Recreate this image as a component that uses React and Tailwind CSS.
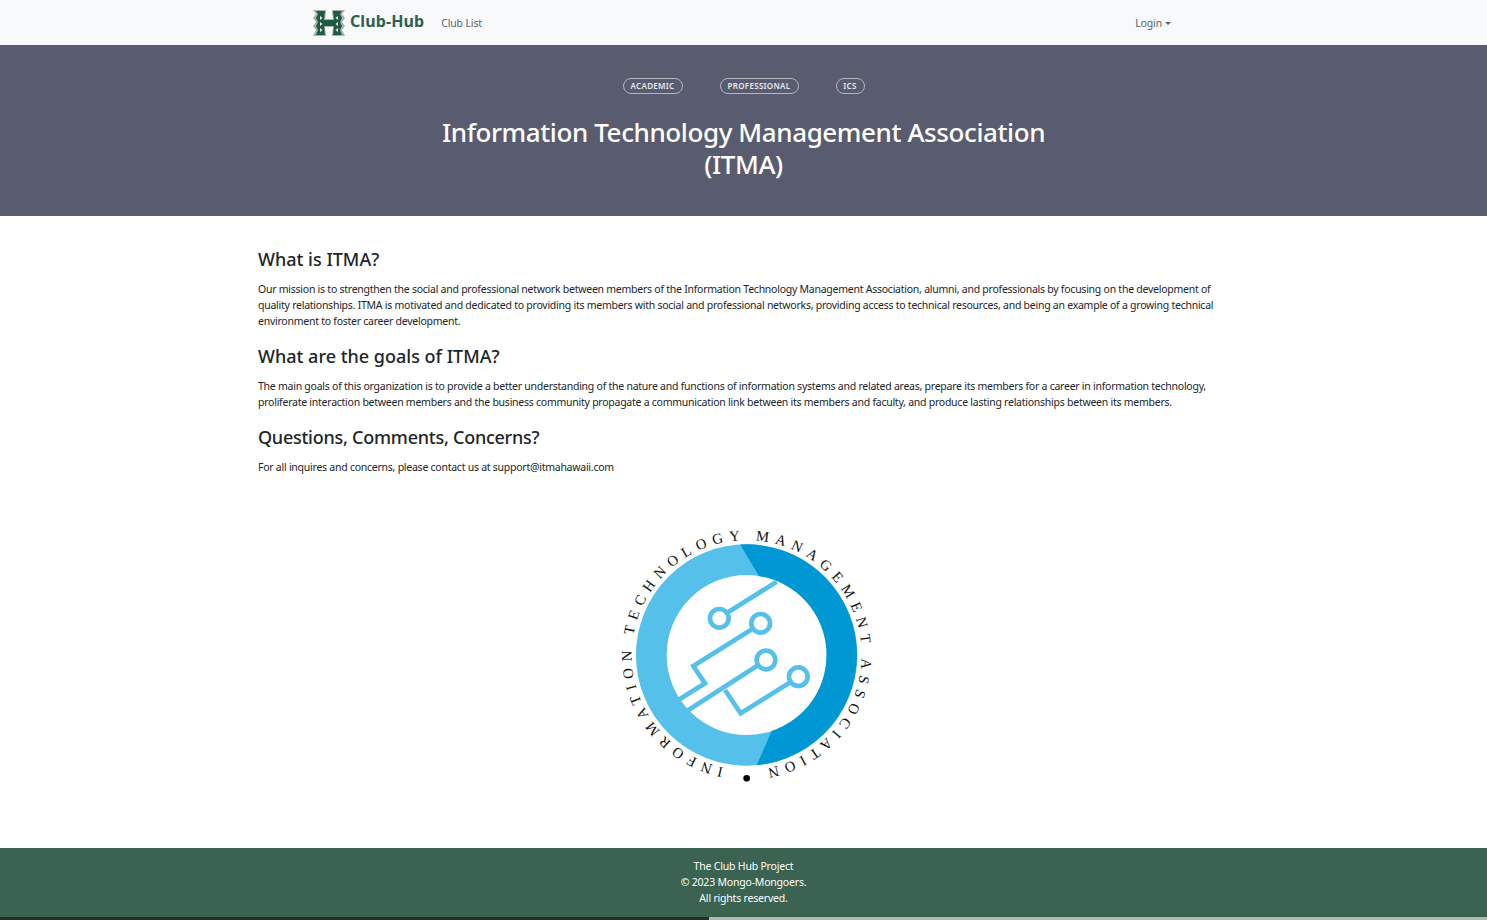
import React from "react";
import { Fragment } from "react";

const font = { fontFamily: '"Noto Sans", "Open Sans", sans-serif' };

function HLogo() {
  return (
    <svg viewBox="0 0 32 28" className="w-[32px] h-[28px] shrink-0">
      {/* grey outline with teeth */}
      <path d="M0 1 L13 1 L13 3 L12 10 L20 10 L19 3 L19 1 L32 1 L29 5 L32 9 L29 13 L32 17 L29 21 L32 27 L19 27 L20 18 L12 18 L13 27 L0 27 L3 21 L0 17 L3 13 L0 9 L3 5 Z" fill="#a9b1ad" />
      <path d="M3 2 L12 2 L11 11 L21 11 L20 2 L29 2 L27 5 L29 9 L27 13 L29 17 L27 21 L29 26 L20 26 L21 17 L11 17 L12 26 L3 26 L5 21 L3 17 L5 13 L3 9 L5 5 Z" fill="#1d5c40" />
      {/* white teeth inside the posts */}
      <g fill="#eef2f0">
        <path d="M7 7 L9.5 9 L7 11 Z" />
        <path d="M7 13 L9.5 15 L7 17 Z" />
        <path d="M7 19 L9.5 21 L7 23 Z" />
        <path d="M25 7 L22.5 9 L25 11 Z" />
        <path d="M25 13 L22.5 15 L25 17 Z" />
        <path d="M25 19 L22.5 21 L25 23 Z" />
      </g>
    </svg>
  );
}

function ItmaLogo() {
  return (
    <svg viewBox="0 0 810 810" className="w-[270px] h-[270px]">
      <defs>
        <path id="itma-arc" d="M 410 750 A 345 345 0 1 1 410.01 750" />
      </defs>
      <circle cx="410" cy="405" r="286" fill="none" stroke="#55c1ea" strokeWidth="92" />
      <path d="M 390 73.6 A 332 332 0 0 1 440 735.6 L 485 633 A 240 240 0 0 0 447 168 Z" fill="#0098d4" />
      <g fill="none" stroke="#55c1ea" strokeWidth="14">
        <path d="M 500 185 L 352 278" />
        <circle cx="328" cy="295" r="28" />
        <path d="M 428 326 L 250 438 L 285 490 L 205 540" />
        <circle cx="452" cy="310" r="28" />
        <path d="M 444 436 L 232 572" />
        <circle cx="468" cy="420" r="28" />
        <path d="M 345 510 L 392 580 L 542 486" />
        <circle cx="565" cy="470" r="28" />
      </g>
      <text fontFamily='"Liberation Serif", serif' fontSize="44" fill="#111">
        <textPath href="#itma-arc" startOffset="70" textLength="2035" lengthAdjust="spacing">
          INFORMATION TECHNOLOGY MANAGEMENT ASSOCIATION
        </textPath>
      </text>
      <circle cx="410" cy="775" r="10" fill="#000" />
    </svg>
  );
}

const tags = [
  { label: "ACADEMIC", cls: "w-[60px]" },
  { label: "PROFESSIONAL", cls: "w-[79px]" },
  { label: "ICS", cls: "w-[29px]" },
];

const sections = [
  {
    title: "What is ITMA?",
    lines: [
      "Our mission is to strengthen the social and professional network between members of the Information Technology Management Association, alumni, and professionals by focusing on the development of",
      "quality relationships. ITMA is motivated and dedicated to providing its members with social and professional networks, providing access to technical resources, and being an example of a growing technical",
      "environment to foster career development.",
    ],
  },
  {
    title: "What are the goals of ITMA?",
    lines: [
      "The main goals of this organization is to provide a better understanding of the nature and functions of information systems and related areas, prepare its members for a career in information technology,",
      "proliferate interaction between members and the business community propagate a communication link between its members and faculty, and produce lasting relationships between its members.",
    ],
  },
  {
    title: "Questions, Comments, Concerns?",
    lines: ["For all inquires and concerns, please contact us at support@itmahawaii.com"],
  },
];

export default function App() {
  return (
    <div className="h-[920px] flex flex-col bg-white overflow-hidden" style={font}>
      {/* navbar */}
      <nav className="h-[45px] bg-[#f8f9fa] flex items-center pl-[313px] pr-[316px]">
        <HLogo />
        <span className="ml-[5px] -mt-[3px] text-[16px] font-bold text-[#2f5f4f] tracking-[0.1px]">Club-Hub</span>
        <span className="ml-[17px] mt-[2px] text-[10.5px] text-[#5f6368] tracking-[-0.15px]">Club List</span>
        <span className="ml-auto mt-[2px] flex items-center gap-[3px] text-[10.5px] text-[#5f6368] tracking-[-0.15px]">
          Login
          <span className="w-0 h-0 border-x-[3px] border-x-transparent border-t-[3px] border-t-[#5f6368]" />
        </span>
      </nav>

      {/* hero */}
      <header className="h-[171px] bg-[#585c6e] flex flex-col items-center pt-[33px]">
        <div className="flex gap-[37px]">
          {tags.map((t) => (
            <span
              key={t.label}
              className={`${t.cls} h-[16px] flex items-center justify-center rounded-full border border-[#b4b6c0] text-[8px] font-semibold tracking-[0.3px] text-[#e8e9ee]`}
            >
              {t.label}
            </span>
          ))}
        </div>
        <h1 className="mt-[22px] text-center text-[26px] leading-[32px] font-medium text-white tracking-[-0.4px]">
          Information Technology Management Association
          <br />
          (ITMA)
        </h1>
      </header>

      {/* about */}
      <main className="flex-1 px-[258px] pt-[30px]">
        {sections.map((s, idx) => (
          <section key={s.title} className="mb-[14px]">
            <h2
              className={`text-[18px] leading-[26px] font-medium text-[#212529] mb-[9px] ${
                idx === 2 ? "tracking-[-0.25px]" : ""
              }`}
            >
              {s.title}
            </h2>
            <p className="text-[10.5px] leading-[16px] text-[#212529] whitespace-nowrap tracking-[-0.25px]">
              {s.lines.map((l, i) => (
                <Fragment key={i}>
                  {l}
                  {i < s.lines.length - 1 && <br />}
                </Fragment>
              ))}
            </p>
          </section>
        ))}
        <div className="flex justify-center mt-[45px] ml-[3px]">
          <ItmaLogo />
        </div>
      </main>

      {/* footer */}
      <footer className="h-[69px] pb-[2px] bg-[#3a6351] flex flex-col items-center justify-center text-[10.5px] leading-[16px] text-white tracking-[-0.2px]">
        <div>The Club Hub Project</div>
        <div>© 2023 Mongo-Mongoers.</div>
        <div>All rights reserved.</div>
      </footer>
      <div className="h-[3px] flex">
        <div className="w-[709px] bg-[#2b2b2b]" />
        <div className="flex-1 bg-[#b5b5b5]" />
      </div>
    </div>
  );
}
